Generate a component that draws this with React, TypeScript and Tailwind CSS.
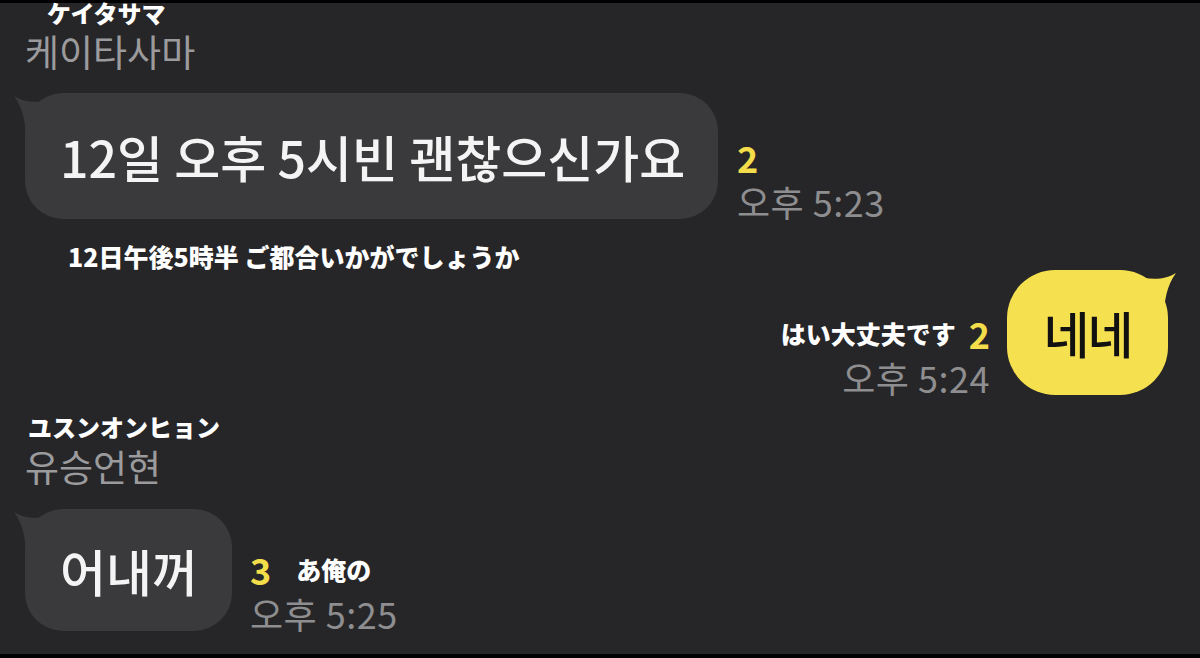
import React from "react";

const KR = "font-['Noto_Sans_CJK_KR','Noto_Sans',sans-serif]";
const JP = "font-['Noto_Sans_CJK_JP','Noto_Sans',sans-serif]";

// tail of a chat bubble, pointing up-left; mirrored for the right side
function Tail({ color, side }: { color: string; side: "left" | "right" }) {
  return (
    <svg
      width="40"
      height="44"
      viewBox="0 0 40 44"
      className={`absolute top-[3px] ${side === "left" ? "left-[-11px]" : "right-[-8px] -scale-x-100"}`}
    >
      <path d="M0 0 C8 5 18 7 32 5 L40 5 L40 44 L12 44 C12 28 9 12 0 0 Z" fill={color} />
    </svg>
  );
}

function Meta({ count, time, note, align }: { count: string; time: string; note?: string; align: "start" | "end" }) {
  const noteEl = note && (
    <span className={`${JP} text-[25px] font-black text-white leading-[34px] ${align === "end" ? "mr-[13px]" : "ml-[25px]"}`}>
      {note}
    </span>
  );
  return (
    <div className={`flex flex-col ${align === "end" ? "items-end" : "items-start"}`}>
      <div className="flex items-center h-[34px]">
        {align === "end" && noteEl}
        <span className={`${KR} text-[36px] font-bold text-[#f3dd4a] leading-[34px]`}>{count}</span>
        {align === "start" && noteEl}
      </div>
      <span className={`${KR} text-[36px] text-[#8e8e90] leading-[36px] mt-[9px] tracking-[0.5px]`}>{time}</span>
    </div>
  );
}

export default function App() {
  return (
    <div className="w-[1200px] h-[658px] bg-black pt-[3px] pb-[4px]">
      <div className="h-full bg-[#262628] flex flex-col">
        {/* first sender */}
        <div className="pl-[25px]">
          <div className={`${JP} text-[24px] font-black text-white leading-[26px] pl-[22px] mt-[-3px]`}>ケイタサマ</div>
          <div className={`${KR} text-[37px] text-[#9b9b9d] leading-[40px] mt-[5px]`}>케이타사마</div>
          <div className="flex items-end gap-[19px] mt-[22px]">
            <div className="relative">
              <Tail color="#3a3a3c" side="left" />
              <div className={`relative w-[693px] h-[126px] rounded-[38px] bg-[#3a3a3c] flex items-center pl-[35px] ${KR} text-[50px] font-medium text-[#f4f4f4]`}>
                12일 오후 5시빈 괜찮으신가요
              </div>
            </div>
            <Meta count="2" time="오후 5:23" align="start" />
          </div>
          <div className={`${JP} text-[25px] font-black text-white leading-[30px] pl-[43px] mt-[22px]`}>
            12日午後5時半 ご都合いかがでしょうか
          </div>
        </div>

        {/* my reply */}
        <div className="flex justify-end items-end gap-[17px] pr-[32px] mt-[-1px]">
          <Meta count="2" time="오후 5:24" align="end" note="はい大丈夫です" />
          <div className="relative">
            <Tail color="#f5e04f" side="right" />
            <div className={`relative w-[161px] h-[125px] rounded-[48px] bg-[#f5e04f] flex items-center justify-center ${KR} text-[50px] font-medium text-[#111] tracking-[-2px]`}>
              네네
            </div>
          </div>
        </div>

        {/* second sender */}
        <div className="pl-[25px] mt-[19px]">
          <div className={`${JP} text-[24px] font-black text-white leading-[26px] pl-[3px]`}>ユスンオンヒョン</div>
          <div className={`${KR} text-[37px] text-[#9b9b9d] leading-[40px] mt-[6px]`}>유승언현</div>
          <div className="flex items-end gap-[18px] mt-[23px]">
            <div className="relative">
              <Tail color="#3a3a3c" side="left" />
              <div className={`relative w-[207px] h-[122px] rounded-[38px] bg-[#3a3a3c] flex items-center pl-[35px] ${KR} text-[50px] font-medium text-[#f4f4f4]`}>
                어내꺼
              </div>
            </div>
            <Meta count="3" time="오후 5:25" align="start" note="あ俺の" />
          </div>
        </div>
      </div>
    </div>
  );
}
